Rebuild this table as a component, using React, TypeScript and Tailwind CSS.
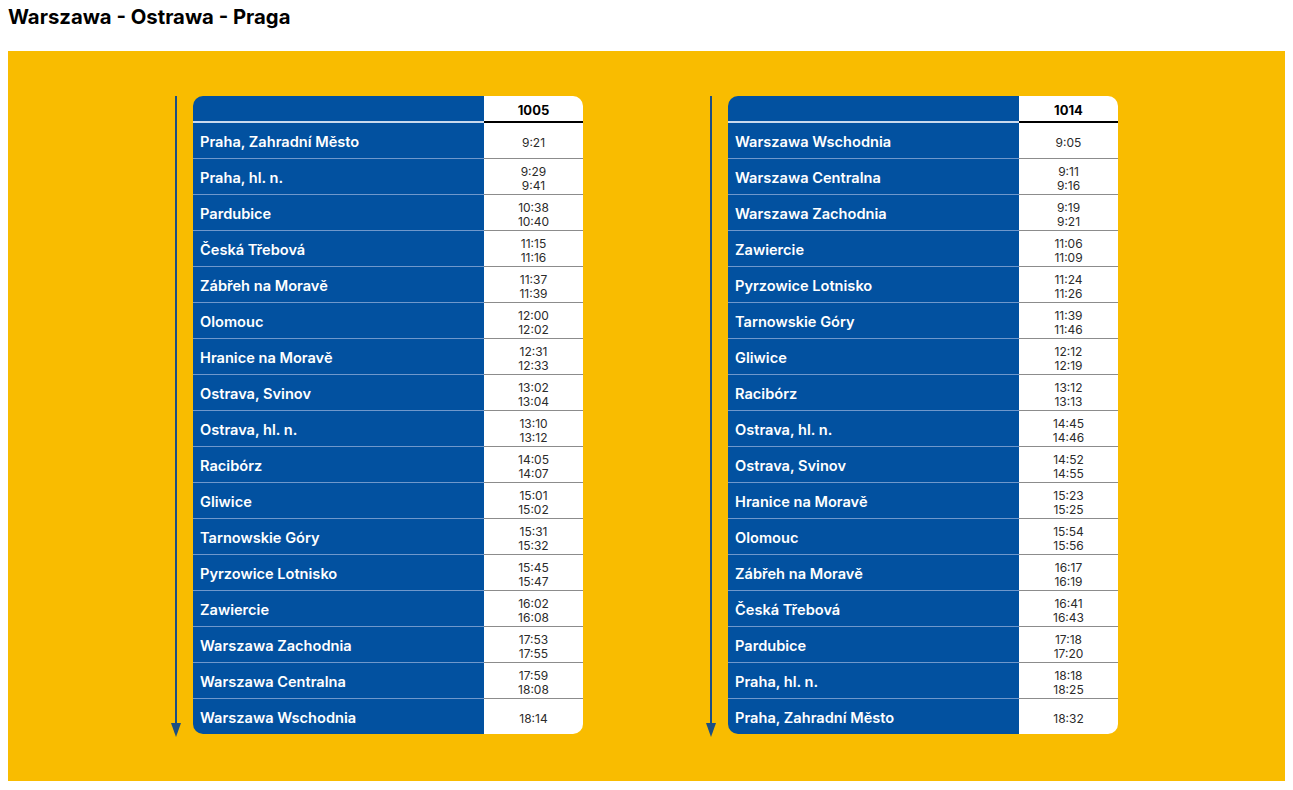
import React from "react";

type Stop = { name: string; times: string[] };

const TRAIN_1005: Stop[] = [
  { name: "Praha, Zahradní Město", times: ["9:21"] },
  { name: "Praha, hl. n.", times: ["9:29", "9:41"] },
  { name: "Pardubice", times: ["10:38", "10:40"] },
  { name: "Česká Třebová", times: ["11:15", "11:16"] },
  { name: "Zábřeh na Moravě", times: ["11:37", "11:39"] },
  { name: "Olomouc", times: ["12:00", "12:02"] },
  { name: "Hranice na Moravě", times: ["12:31", "12:33"] },
  { name: "Ostrava, Svinov", times: ["13:02", "13:04"] },
  { name: "Ostrava, hl. n.", times: ["13:10", "13:12"] },
  { name: "Racibórz", times: ["14:05", "14:07"] },
  { name: "Gliwice", times: ["15:01", "15:02"] },
  { name: "Tarnowskie Góry", times: ["15:31", "15:32"] },
  { name: "Pyrzowice Lotnisko", times: ["15:45", "15:47"] },
  { name: "Zawiercie", times: ["16:02", "16:08"] },
  { name: "Warszawa Zachodnia", times: ["17:53", "17:55"] },
  { name: "Warszawa Centralna", times: ["17:59", "18:08"] },
  { name: "Warszawa Wschodnia", times: ["18:14"] },
];

const TRAIN_1014: Stop[] = [
  { name: "Warszawa Wschodnia", times: ["9:05"] },
  { name: "Warszawa Centralna", times: ["9:11", "9:16"] },
  { name: "Warszawa Zachodnia", times: ["9:19", "9:21"] },
  { name: "Zawiercie", times: ["11:06", "11:09"] },
  { name: "Pyrzowice Lotnisko", times: ["11:24", "11:26"] },
  { name: "Tarnowskie Góry", times: ["11:39", "11:46"] },
  { name: "Gliwice", times: ["12:12", "12:19"] },
  { name: "Racibórz", times: ["13:12", "13:13"] },
  { name: "Ostrava, hl. n.", times: ["14:45", "14:46"] },
  { name: "Ostrava, Svinov", times: ["14:52", "14:55"] },
  { name: "Hranice na Moravě", times: ["15:23", "15:25"] },
  { name: "Olomouc", times: ["15:54", "15:56"] },
  { name: "Zábřeh na Moravě", times: ["16:17", "16:19"] },
  { name: "Česká Třebová", times: ["16:41", "16:43"] },
  { name: "Pardubice", times: ["17:18", "17:20"] },
  { name: "Praha, hl. n.", times: ["18:18", "18:25"] },
  { name: "Praha, Zahradní Město", times: ["18:32"] },
];

function DownArrow() {
  return (
    <svg width="14" height="641" viewBox="0 0 14 641" className="shrink-0">
      <line x1="7" y1="0" x2="7" y2="630" stroke="#1c4f83" strokeWidth="2" />
      <polygon points="2,627 12,627 7,641" fill="#1c4f83" />
    </svg>
  );
}

function Timetable({ train, stops }: { train: string; stops: Stop[] }) {
  return (
    <div className="flex gap-[10px]">
      <DownArrow />
      <div className="w-[390px] self-start overflow-hidden rounded-[10px]">
        <div className="flex h-[27px]">
          <div className="w-[291px] border-b-2 border-[#c9d9ee] bg-[#0251a0]" />
          <div className="flex flex-1 items-center justify-center border-b-2 border-black bg-white pt-[5px] text-[13px] font-bold text-black">
            {train}
          </div>
        </div>
        {stops.map((s, i) => {
          const last = i === stops.length - 1;
          return (
            <div key={s.name} className={`flex ${last ? "h-[35px]" : "h-[36px]"}`}>
              <div
                className={`flex w-[291px] items-center bg-[#0251a0] pl-[7px] pt-[5px] text-[14.6px] font-semibold text-white ${
                  last ? "" : "border-b border-[#6f98cc]"
                }`}
              >
                {s.name}
              </div>
              <div
                className={`flex flex-1 flex-col items-center justify-center bg-white pt-[4px] text-[12px] leading-[14px] text-[#2b2b2b] ${
                  last ? "" : "border-b border-[#8c8c8c]"
                }`}
              >
                {s.times.map((t) => (
                  <span key={t}>{t}</span>
                ))}
              </div>
            </div>
          );
        })}
      </div>
    </div>
  );
}

export default function App() {
  return (
    <div className="min-h-[790px] bg-white font-['Inter','Noto_Sans',sans-serif]">
      <h2 className="h-[51px] px-2 pt-[4px] text-[20.3px] font-bold leading-[26px] text-black">
        Warszawa - Ostrawa - Praga
      </h2>
      <section className="mx-2 flex h-[730px] justify-center gap-[121px] bg-[#f9bc00] pr-[6px] pt-[45px]">
        <Timetable train="1005" stops={TRAIN_1005} />
        <Timetable train="1014" stops={TRAIN_1014} />
      </section>
    </div>
  );
}
